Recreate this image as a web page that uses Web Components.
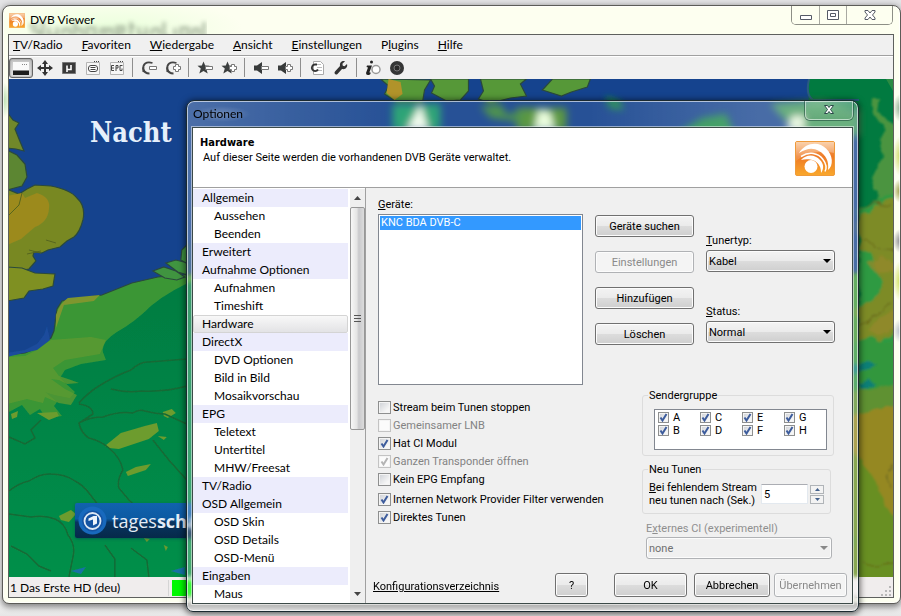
<!DOCTYPE html>
<html lang="de">
<head>
<meta charset="utf-8">
<title>DVB Viewer</title>
<style>
  html, body { margin: 0; height: 100%; }
  body { font: 11px/13px Roboto, "Liberation Sans", sans-serif; color: #000; }
</style>
</head>
<body>
<desk-top>
  <app-window heading="DVB Viewer">
    <menu-bar slot="bars">
      <menu-item><u>T</u>V/Radio</menu-item><menu-item><u>F</u>avoriten</menu-item><menu-item><u>W</u>iedergabe</menu-item><menu-item><u>A</u>nsicht</menu-item><menu-item><u>E</u>instellungen</menu-item><menu-item>P<u>l</u>ugins</menu-item><menu-item><u>H</u>ilfe</menu-item>
    </menu-bar>
    <tool-bar slot="bars"></tool-bar>
    <weather-map>Nacht</weather-map>
    <status-bar slot="status">1 Das Erste HD (deu)</status-bar>
  </app-window>

  <options-dialog heading="Optionen">
    <page-header slot="header" heading="Hardware">Auf dieser Seite werden die vorhandenen DVB Geräte verwaltet.</page-header>
    <option-tree slot="tree">
      <tree-item group>Allgemein</tree-item>
      <tree-item>Aussehen</tree-item>
      <tree-item>Beenden</tree-item>
      <tree-item group>Erweitert</tree-item>
      <tree-item group>Aufnahme Optionen</tree-item>
      <tree-item>Aufnahmen</tree-item>
      <tree-item>Timeshift</tree-item>
      <tree-item group selected>Hardware</tree-item>
      <tree-item group>DirectX</tree-item>
      <tree-item>DVD Optionen</tree-item>
      <tree-item>Bild in Bild</tree-item>
      <tree-item>Mosaikvorschau</tree-item>
      <tree-item group>EPG</tree-item>
      <tree-item>Teletext</tree-item>
      <tree-item>Untertitel</tree-item>
      <tree-item>MHW/Freesat</tree-item>
      <tree-item group>TV/Radio</tree-item>
      <tree-item group>OSD Allgemein</tree-item>
      <tree-item>OSD Skin</tree-item>
      <tree-item>OSD Details</tree-item>
      <tree-item>OSD-Menü</tree-item>
      <tree-item group>Eingaben</tree-item>
      <tree-item>Maus</tree-item>
    </option-tree>
    <hardware-page></hardware-page>
  </options-dialog>
</desk-top>

<script>
const define = (name, html, setup) => {
  const template = document.createElement('template');
  template.innerHTML = `<style>*, *::before, *::after { box-sizing: border-box; } :host { box-sizing: border-box; }</style>` + html;
  customElements.define(name, class extends HTMLElement {
    constructor() {
      super();
      this.attachShadow({ mode: 'open' }).append(template.content.cloneNode(true));
    }
    connectedCallback() { if (setup) setup(this, this.shadowRoot); }
  });
};

const UI = `Lato, "Open Sans", sans-serif`;

/* Desktop: free canvas that holds the windows */
define('desk-top', `
<style>
  :host { display: block; position: relative; min-height: 100vh; overflow: hidden;
    background: linear-gradient(#e4e4e6 0 4px, #fff 22px, #fff 96%, #e6e6e6); }
  ::slotted(app-window) { position: absolute; inset: 5px 0 12px 2px; }
  ::slotted(options-dialog) { position: absolute; inset: 100px 42px 4px 186px; }
</style>
<slot></slot>`);

/* Orange broadcast logo */
define('dvb-logo', `
<style>:host { display: block; } svg { display: block; width: 100%; height: 100%; }</style>
<svg viewBox="0 0 40 35" preserveAspectRatio="none" aria-hidden="true">
  <defs>
    <linearGradient id="g" x1="0" y1="0" x2="0" y2="1"><stop offset="0" stop-color="#f5a45a"/><stop offset=".45" stop-color="#ee7a26"/><stop offset="1" stop-color="#f9a82c"/></linearGradient>
    <linearGradient id="h" x1="0" y1="0" x2="0" y2="1"><stop offset="0" stop-color="#fff" stop-opacity=".5"/><stop offset="1" stop-color="#fff" stop-opacity=".1"/></linearGradient>
  </defs>
  <rect x=".5" y=".5" width="39" height="34" rx="1.5" fill="url(#g)" stroke="#ef9a3a"/>
  <path d="M1 1h38v11C26 9 12 12 1 20z" fill="url(#h)"/>
  <circle cx="16" cy="25.500" r="6.500" fill="#fff"/>
  <path d="M4 12C9 4 18 1 26 4c8 4 13 13 10 21-1 2-2 3-3 4 1-9-2-15-9-19-7-4-13-2-20 2z" fill="#fff"/>
  <path d="M6 19c5-6 14-6 19 0 4 4 4 9 1 13 0-6-2-9-6-12-4-2-10-2-14-1z" fill="#fff"/>
  <path d="M6 15.500c8-5 17-4 22 3 3 4 4 8 2 12" fill="none" stroke="#fff" stroke-width="1.500"/>
</svg>`);

/* Main window */
define('app-window', `
<style>
  :host { display: flex; flex-direction: column; padding: 0 6px 5px 5px; border: 1px solid #5c5c58; border-radius: 8px 8px 7px 7px;
    background:
      radial-gradient(7px 14px at 100% 102px, #8fae93, transparent),
      radial-gradient(7px 20px at 100% 150px, #cfd964, transparent),
      radial-gradient(7px 12px at 100% 185px, #9a9a40, transparent),
      radial-gradient(7px 12px at 100% 235px, #88888e, transparent),
      radial-gradient(7px 20px at 100% 275px, #cfe05c, transparent),
      radial-gradient(7px 12px at 100% 325px, #b5bcc9, transparent),
      radial-gradient(8px 18px at 0 94px, #b9dfae, transparent),
      radial-gradient(130px 30px at 110px 22px, #eaffdc, transparent),
      #fdfff0;
    box-shadow: inset 0 0 0 1px #ffffffb0, 0 2px 6px 1px #0007; font: 12px/16px ${UI}; }
  header { display: flex; align-items: flex-start; flex: none; height: 28px; position: relative; }
  .behind { position: absolute; left: 19px; top: 12px; height: 16px; overflow: hidden; }
  .behind svg { display: block; filter: blur(2px); }
  dvb-logo { width: 16px; height: 15px; margin: 7px 0 0 1px; }
  h1 { margin: 6px auto 0 5px; font: inherit; position: relative; }
  .buttons { display: flex; margin-right: 1px; border: 1px solid #8d8f86; border-top: 0; border-radius: 0 0 5px 5px; overflow: hidden; position: relative; }
  button { width: 27px; height: 18px; padding: 0; border: 0; border-left: 1px solid #a9aaa2; background: #fdfff0; display: grid; place-items: center; }
  button:first-child { border-left: 0; }
  button:last-child { width: 46px; }
  .body { flex: 1; min-height: 0; display: flex; flex-direction: column; border: 1px solid #5e605e; background: #f0f0f0; }
  slot { display: contents; }
  ::slotted(weather-map) { flex: 1; min-height: 0; }
</style>
<header>
  <div class="behind" aria-hidden="true"><svg width="180" height="22"><path d="M2 8h9M4 13h8v6M16 3v16M22 9v9h8v-9M36 10v8M36 11h7v8M48 4v15M48 11h7v8M60 10h8v9h-8zM74 10v9M74 11h5v8M79 11h6v8M90 14h7v-5h-7v10h8M104 4v15M102 9h6M112 9v9h7v-9M125 11v8M125 11h7v8M137 4v15h6M148 10v9M154 10h7v9h-7zM166 10v9M166 11h6v8M177 4v18h-4" fill="none" stroke="#a9b8a0" stroke-width="3"/></svg></div>
  <dvb-logo></dvb-logo><h1></h1>
  <div class="buttons">
    <button aria-label="Minimieren"><svg width="14" height="14"><path d="M1.500 7.500h11v4h-11z" fill="#fff" stroke="#555a66"/></svg></button>
    <button aria-label="Maximieren"><svg width="14" height="14"><path d="M1.500 2.500h11v9h-11z" fill="#fff" stroke="#555a66"/><path d="M4.500 5.500h5v3h-5z" fill="#fff" stroke="#555a66"/></svg></button>
    <button aria-label="Schließen"><svg width="14" height="14"><path d="M2 2.500h3l2 2.500 2-2.500h3v1.500l-2.500 3 2.500 3v1.500h-3l-2-2.500-2 2.500h-3v-1.500l2.500-3-2.500-3z" fill="#fff" stroke="#555a66"/></svg></button>
  </div>
</header>
<div class="body"><slot name="bars"></slot><slot></slot><slot name="status"></slot></div>`,
(el, root) => { root.querySelector('h1').textContent = el.getAttribute('heading'); });

define('menu-bar', `
<style>:host { display: flex; flex: none; height: 20px; align-items: center; background: #f0f0f0; padding-left: 4px; gap: 19px; }</style><slot></slot>`,
el => el.setAttribute('role', 'menubar'));

define('menu-item', `
<style>:host { display: block; } button { display: block; border: 0; padding: 0; background: none; font: 12px/18px ${UI}; color: #000; }</style>
<button role="menuitem"><slot></slot></button>`);

/* Tool bar */
const minus = `<path d="M8.500 6.500h7v3h-7z" fill="#fff" stroke="#777"/>`;
const plus = `<path d="M10.500 4.500h3v2h2v3h-2v2h-3v-2h-2v-3h2z" fill="#fff" stroke="#777"/>`;
const curl = `<path d="M11.500 3C5 1 1.500 4.500 2.500 9c.6 2.700 2.500 4.500 6 4.500" fill="none" stroke="#444" stroke-width="1.800"/><path d="M1 6.500l.5 5.500 3.500.5z" fill="#444"/>`;
const star = `<path d="M6.500 1.500l1.700 4 4.300.3-3.300 2.800 1.500 5-4.200-2.600L2.300 13.600l1.500-5L.5 5.800l4.300-.3z" fill="#3c3f3f"/>`;
const speaker = `<path d="M1 5.500h3L9 2v12l-5-3.500H1z" fill="#383b3b"/>`;
const frame = `<path d="M1.500 2.500h13v12h-13z" fill="#f6f6f6" stroke="#b5b5b5"/><path d="M9 1.500h6" stroke="#444" stroke-dasharray="1 1"/>`;
const tools = [
  ['Fenstermodus', `<path d="M0 2h16v8H0z" fill="#fafafa"/><path d="M9 4.500h5" stroke="#888" stroke-dasharray="1 1"/><path d="M0 10h16v2H0z" fill="#888"/><path d="M0 11h16v4H0z" fill="#1d1d1d"/>`, 1],
  ['Vollbild', `<path d="M7 4h2v3h3V5l4 3-4 3V9H9v3h2l-3 4-3-4h2V9H4v2L0 8l4-3v2h3V4H5l3-4 3 4z" fill="#333"/>`],
  ['Teletext', `<path d="M1.500 2.500h13v11h-13z" fill="#3a3a3a" stroke="#777"/><path d="M6 12V5.500M6 9.500h4V5" fill="none" stroke="#fff" stroke-width="1.600"/>`],
  ['Untertitel', frame + `<rect x="3.500" y="5.500" width="9" height="6" rx="2.500" fill="#fff" stroke="#444"/><path d="M5.500 7.500h5M5.500 9.500h5" stroke="#444"/>`],
  ['EPG', frame + `<path d="M5 5.500H2.500v5H5M3 8h2M7 11V5.500h2V8H7M13.500 5.500H11v5h2V8.500" fill="none" stroke="#444"/>`],
  null,
  ['Kanal zurück', curl + minus], ['Kanal vor', curl + plus],
  null,
  ['Favorit zurück', star + minus], ['Favorit vor', star + plus],
  null,
  ['Leiser', speaker + minus], ['Lauter', speaker + plus],
  null,
  ['Aktualisieren', `<path d="M4.500 1.500h7l3 3v10h-10z" fill="#fff" stroke="#aaa"/><path d="M8 4.500h4M8 7.500h5M8 10.500h5" stroke="#bbb"/><path d="M8 4.500H6a3.300 3.300 0 1 0 3 5" fill="none" stroke="#333" stroke-width="1.800"/>`],
  ['Optionen', `<path d="M14 4l-2.500 2.200-1.700-.5-.4-1.900L12 1.300C9 .5 6.500 2.500 7 6L2 11.500c-1.500 2 .7 4 2.500 2.500L9 9c3.500.9 6-2 5-5z" fill="#333"/>`],
  null,
  ['Information', `<circle cx="11" cy="9.500" r="4" fill="#fff" stroke="#999" stroke-width="1.500"/><circle cx="6.500" cy="2" r="1.500" fill="#222"/><path d="M2 5.500h5l-2.500 6.500q0 1 1.500.5l-1 2q-4 1.500-4-1.500l2-5.500-1.500-.5z" fill="#222"/>`],
  ['Aufnahme', `<circle cx="8" cy="8" r="7" fill="#353636"/><circle cx="8" cy="8" r="3" fill="#2a2a2a" stroke="#777"/>`]
];
define('tool-bar', `
<style>
  :host { display: flex; flex: none; align-items: center; height: 24px; border-top: 1px solid #a0a0a0; box-shadow: inset 0 1px #fff; background: #f0f0f0; }
  button { width: 24px; height: 20px; padding: 0; border: 1px solid transparent; background: none; display: grid; place-items: center; }
  button.on { border: 1px solid #666; border-radius: 3px; background: linear-gradient(#c4c4c4, #e4e4e4); box-shadow: inset 0 0 2px #777; }
  i { width: 1px; height: 19px; margin: 0 4px 0 3px; background: #8e8e8e; }
  svg { display: block; }
</style>`,
(el, root) => {
  el.setAttribute('role', 'toolbar');
  for (const tool of tools) {
    root.append(document.createRange().createContextualFragment(tool
      ? `<button class="${tool[2] ? 'on' : ''}" aria-label="${tool[0]}"><svg width="16" height="16" viewBox="0 0 16 16" aria-hidden="true">${tool[1]}</svg></button>`
      : '<i></i>'));
  }
});

/* TV picture: weather map with its captions pinned over it */
define('weather-map', `
<style>
  :host { display: block; position: relative; overflow: hidden; background: #15438e; }
  svg.map { position: absolute; inset: 0; width: 100%; height: 100%; }
  .title { position: absolute; left: 81px; top: 38px; font: bold 27px/32px "DejaVu Serif Condensed", "DejaVu Serif", serif; color: #e6f0fb; }
  .banner { position: absolute; left: 66px; bottom: 39px; display: flex; align-items: center; gap: 5px; height: 35px; width: 300px; padding-left: 3px;
    background: linear-gradient(#1162ae, #0c5aa2 45%, #08345f 55%, #06294a); border-radius: 2px; box-shadow: 0 1px 3px #0357; color: #e3edf7; font: 18px/24px "Open Sans", sans-serif; }
  .banner svg { flex: none; }
</style>
<svg class="map" viewBox="8 79 885 498" preserveAspectRatio="none" aria-hidden="true">
  <defs>
    <filter id="s" x="-20%" y="-50%" width="140%" height="200%"><feGaussianBlur stdDeviation="3"/></filter>
    <filter id="t" x="-5%" y="-5%" width="110%" height="110%"><feGaussianBlur stdDeviation=".6"/></filter>
    <filter id="u" x="-50%" y="-5%" width="200%" height="110%"><feTurbulence type="fractalNoise" baseFrequency=".06" numOctaves="3" seed="4"/><feDisplacementMap in="SourceGraphic" scale="12" xChannelSelector="R" yChannelSelector="G" result="d"/><feGaussianBlur in="d" stdDeviation=".8"/></filter>
    <linearGradient id="k" x1="0" y1="0" x2="0" y2="1"><stop offset="0" stop-color="#007c42"/><stop offset="1" stop-color="#068f4a"/></linearGradient>
  </defs>
  <rect x="8" y="79" width="885" height="498" fill="#15438e"/>
  <g filter="url(#t)">
  <g stroke="#2b4a3c" stroke-width="1.200">
    <path d="M6 112l6 8 6 3-4 6 4 10 5 12-8-2-9-1z" fill="#71882c"/>
    <path d="M6 150l10 5 8 9 2 13-5 9-15 4z" fill="#5b8630"/>
    <path d="M6 189l12 5 8-5 8-4 16 1q20 4 26 12 9 8 6 22-3 12-9 17l-7 4-7 6-12 3-6 3-8-1-1 4 3 5-7 8-12 2H6z" fill="#788824"/>
    <path d="M6 267l15 1 13 5 20 1-2 12-10 3-14 2-5 7-17 3z" fill="#7f9023"/>
    <path d="M6 355l18-2 12-5 14-10 3-7 3-22 5-8 40-6 30-12 26-6 50-4h700v306H6z" fill="#3b9636"/>
    <path d="M152 271l11-4 12 4 9 6-8 3-12-2zM165 263l10-3 12 3v12l-10-3zM181 250l6-6v20l-7-4z" fill="#3f9440"/>
    <path d="M380 79l8 7-4 8 12 8h26l2-12 6-10zM430 79l4 7-3 7 15 8 14-1 8-9v-12zM480 79l3 12-5 8 12 4 20-5 16-2-6-12 6-5zM542 90l10-11h38l-3 8-16 5-10 4z" fill="#579839"/>
  </g>
  <path d="M6 196l15-3 3 5 12-5q14 4 12 16-1 13-14 18l-14 12-14 6z" fill="#9c8a1e"/>
  <path d="M8 215l10-10 3-12M28 250l12 3M45 240l10 3M26 254l14-3" fill="none" stroke="#56651f"/>
  <path d="M388 79l12 3 2 12-8 6-8-7z" fill="#b19329"/>
  <path d="M55 315q4-12 12-17l32-3-6 6-30 4-8 23z" fill="#7f962f"/>
  <path d="M200 278q-28 10-50 28-16 16-34 26-16 10-14 20l3 8-25 4-16 6-5 8 15 14-5 6-15-3-10-3 12 10-3 4 8 10-16 2-6-9-10 6-8-10-15 8v166h185z" fill="url(#k)"/>
  <path d="M6 357l18-1 12-6 14-10 40-3 15 3-6 14-35 6-12 8 6 8 12 4 8 3-12 1-8-4-8-1 14 10 12 6-6 10-12-2-14-6-2 6-16-4-20 5z" fill="#5f9a2f" opacity=".8"/>
  <path d="M6 357l16-4 14-3 13-10-3-14-3 9-7 9-12 6-18 3z" fill="#1b4c9c"/>
  <g fill="#6d9c2e">
    <path d="M104 446l16-13 24-7 12-3 2 8-10 8-30 10-10-1zM125 472l10-5 15-3-5 6-18 6zM162 412l9-3 4 4-8 5-4-2zM36 413l20-1 2 4-10 4zM10 414l7-3-1 6-5 2zM58 516l12-6 5 4-7 8-8-2zM157 436l9 1-3 3zM143 538l6 1-3 3zM163 545l4 2-2 4z"/>
  </g>
  <path d="M70 571l15-4-5 7zM170 571l14-4v8z" fill="#1472a4"/>
  <g fill="none" stroke="#146a36" stroke-width="1.500">
    <path d="M78 403q10-11 20-17 16-10 32-16 10-9 18-8l38-3M80 422q10-5 22-5 16-6 30-4 6-4 12-2 12 3 20 3l22 10M110 389q16 4 30 2 26 1 46-5M78 404q14 2 14 10l-14 9q2 10 10 15 12 3 20 10 12 10 14 22-6 10-4 18l10 12q8 6 8 14l-8 6M8 491q10-8 20-10 12-8 22-7 14 0 24 7 8 4 14 12l14 18M8 514l22 3q14-2 24 2 10 4 13 16 8 10 5 22l-4 20M40 420l-10 10 4 8-10 6-16-7M10 546l16 8 12 12 12 5M104 545l10 14v18M130 548l16 12 2 17M152 440l16 20 18 20"/>
  </g>
  </g>
  <path d="M808 79h85v240l-34 4V110h-50z" fill="#017a40"/>
  <path d="M809 79q-4 16 4 21h46" fill="none" stroke="#2a5c80" stroke-width="2"/>
  <path d="M872 79h14l7 12v-12z" fill="#2b8b42"/>
  <g filter="url(#u)">
  <path d="M900 213l-25-4 1-20-3-14 9-17-2-12 4-14-6-8-7-10 1-17 8 3-2 10 12 15 10 10z" fill="#4b9440"/>
  <path d="M900 190l-41 18v185l41-6z" fill="#2e9a42"/>
  <path d="M900 195l-27 10-14 16v28l14 5 10 28-12 20-12 6v60l14-20 8-10 19-8z" fill="#7d8b25"/>
  <path d="M900 266l-21-8-12 6 12 8 21 3zM900 305l-17 11-14 12 8 8 23-10z" fill="#93882a" opacity=".8"/>
  <path d="M850 345l21-6 10 4 19-4v50l-50 6z" fill="#33973e"/>
  <path d="M850 364l21-5 8 5-7 6-22 4zM855 384l14-4 6 4-16 6z" fill="#087f76"/>
  <path d="M850 392l21-4 29-6v200h-50z" fill="#5f9130"/>
  <path d="M850 416l50-12v126l-27-34-14-10-9-20z" fill="#958824"/>
  <path d="M850 450l21 24 29 56v60h-50z" fill="#678f20"/>
  <path d="M859 210l14-8 20 2M862 240l16 8 14 2M859 325l16-10 10-9 8-4M893 465l-6 10 5 12M859 562l16 3 18-2" fill="none" stroke="#65631e"/>
  </g>
  <g filter="url(#s)">
    <path d="M392 104h48v26h-48z" fill="#1e9d6c"/><path d="M516 108h50v22h-50z" fill="#4f9130"/><path d="M480 106l20-2 6 10 20-2-6 10-30-4z" fill="#418a40"/>
    <path d="M420 104l8 26h-22z" fill="#f4fff0"/><path d="M538 110l12 2 4 18h-20z" fill="#eaffdc"/>
    <path d="M682 130l20-12 24-4 8 20h-54zM605 96l16 6 2 8-14-2z" fill="#1c8c46"/>
    <path d="M770 104l50-4 40 10v26h-60z" fill="#3f9a5c"/><path d="M792 116h12v14h-18z" fill="#e6f8dd"/>
  </g>
</svg>
<div class="title"><slot></slot></div>
<div class="banner"><svg width="29" height="29" viewBox="0 0 29 29" aria-hidden="true"><circle cx="14.500" cy="14.500" r="14" fill="#1869bd"/><circle cx="14.500" cy="15" r="10.500" fill="#1553a2"/><circle cx="14.500" cy="15" r="8" fill="none" stroke="#dfe9f5" stroke-width="1.800"/><path d="M10.500 12.500l5-2.500h3.500v7.500l-4 2v-6l-4.500 1.500z" fill="#eef4fb"/></svg><span>tages<b>schau</b></span></div>`);

define('status-bar', `
<style>
  :host { display: flex; flex: none; align-items: center; height: 20px; padding-top: 1px; background: #f0eded; font: 12px/18px ${UI}; }
  .name { width: 159px; padding-left: 1px; }
  .signal { width: 60px; height: 16px; margin-left: 3px; background: #00f800; }
  .cell { border-left: 1px solid #d5d5d5; }
  svg { margin: 0 1px 0 auto; align-self: flex-end; }
</style>
<div class="name"><slot></slot></div><div class="cell"><div class="signal"></div></div>
<svg width="12" height="12" aria-hidden="true"><path d="M9 1h2v2H9zM9 5h2v2H9zM9 9h2v2H9zM5 5h2v2H5zM5 9h2v2H5zM1 9h2v2H1z" fill="#b8b8b8"/></svg>`);

/* Options dialog: glass frame */
define('options-dialog', `
<style>
  :host { display: flex; flex-direction: column; padding: 0 5px 7px 5px; border: 1px solid #1b2a30; border-radius: 8px 8px 7px 7px;
    background: linear-gradient(90deg, #ffffff3c, #ffffff14 30%, #ffffff14 60%, #ffffff38 85%, #ffffff38); backdrop-filter: blur(2px);
    box-shadow: inset 0 0 0 1px #ffffff9c, 0 1px 6px 1px #0009; }
  header { display: flex; flex: none; align-items: flex-start; height: 26px; }
  h2 { margin: 5px auto 0 0; padding: 0 8px 0 1px; font: 12px/16px ${UI}; background: radial-gradient(closest-side, #ffffff38, transparent); }
  button { width: 48px; height: 19px; padding: 0; border: 1px solid #dfeee6a0; border-top: 0; border-radius: 0 0 5px 5px; background: linear-gradient(#ffffff30, #ffffff08 50%, #0000000a); display: grid; place-items: center; box-shadow: 0 0 0 1px #0f3a3080; }
  .body { flex: 1; min-height: 0; display: grid; grid-template: auto minmax(0, 1fr) / 173px minmax(0, 1fr); border: 1px solid #3c4a48; outline: 1px solid #ffffff80; background: #f0f0f0; }
  ::slotted([slot=header]) { grid-column: 1 / -1; }
</style>
<header><h2></h2><button aria-label="Schließen"><svg width="14" height="14"><path d="M2.500 2.500h3l1.500 2 1.500-2h3l-3 4 3 4h-3l-1.500-2-1.500 2h-3l3-4z" fill="#fff" stroke="#2c4a4a"/></svg></button></header>
<div class="body"><slot name="header"></slot><slot name="tree"></slot><slot></slot></div>`,
(el, root) => { root.querySelector('h2').textContent = el.getAttribute('heading'); });

define('page-header', `
<style>
  :host { display: flex; justify-content: space-between; align-items: flex-start; height: 60px; padding: 8px 17px 0 7px; border-bottom: 1px solid #a0a0a0; background: #fff; }
  h3 { margin: 0; font: bold 11px/14px "DejaVu Sans Condensed", "DejaVu Sans", sans-serif; }
  p { margin: 0; padding-left: 3px; line-height: 15px; }
  dvb-logo { width: 40px; height: 35px; margin-top: 5px; flex: none; }
</style>
<div><h3></h3><p><slot></slot></p></div><dvb-logo></dvb-logo>`,
(el, root) => { root.querySelector('h3').textContent = el.getAttribute('heading'); });

define('option-tree', `
<style>
  :host { display: grid; grid-template-columns: minmax(0, 1fr) 15px; gap: 2px; min-height: 0; padding-top: 1px; overflow: hidden; border-right: 1px solid #a0a0a0; background: #fff; }
  .rows { overflow: hidden; }
  .scroll { display: flex; flex-direction: column; background: #efefef; }
  .scroll button { flex: none; height: 18px; width: 15px; padding: 0; border: 0; background: none; display: grid; place-items: center; }
  .track { flex: 1; }
  .thumb { height: 59%; width: 15px; border: 1px solid #979797; border-radius: 2px; background: linear-gradient(90deg, #f7f7f7, #e4e4e4 45%, #c9c9cc 60%, #dcdcdc); display: grid; place-items: center; }
</style>
<div class="rows" role="tree"><slot></slot></div>
<div class="scroll">
  <button aria-label="Nach oben"><svg width="7" height="4"><path d="M0 4h7L3.500 0z" fill="#444"/></svg></button>
  <div class="track"><div class="thumb"><svg width="7" height="7"><path d="M0 .5h7M0 3.500h7M0 6.500h7" stroke="#555"/></svg></div></div>
  <button aria-label="Nach unten"><svg width="7" height="4"><path d="M0 0h7L3.500 4z" fill="#444"/></svg></button>
</div>`);

define('tree-item', `
<style>
  :host { display: block; }
  button { display: block; width: 100%; height: 18px; padding: 0 0 0 21px; border: 0; background: #fff; color: #000; font: 12px/18px ${UI}; text-align: left; }
  :host([group]) button { padding-left: 9px; background: #ececfc; }
  :host([selected]) button { padding-left: 8px; line-height: 16px; border: 1px solid #d4d4d4; border-radius: 2px; background: linear-gradient(#f8f8f8, #e3e3e5); }
</style>
<button role="treeitem"><slot></slot></button>`);

/* Form controls */
define('push-button', `
<style>
  :host { display: block; }
  button { display: block; width: 100%; height: var(--height, 22px); padding: 0 2px; border: 1px solid #707070; border-radius: 3px; font: inherit; color: #000; white-space: nowrap;
    background: linear-gradient(#f3f3f3, #ebebeb 48%, #dcdcdc 52%, #cfcfcf); box-shadow: inset 0 0 0 1px #fcfcfc; }
  button:disabled { color: #8a8a8a; border-color: #b0b2b5; background: #f4f4f4; }
</style>
<button><slot></slot></button>`,
(el, root) => { root.querySelector('button').disabled = el.hasAttribute('disabled'); });

define('drop-down', `
<style>
  :host { display: block; }
  label { display: block; }
  .box { display: grid; align-items: center; margin-top: var(--gap, 3px); }
  select, svg { grid-area: 1 / 1; }
  select { appearance: none; width: 100%; height: 22px; margin: 0; padding: 0 18px 0 2px; border: 1px solid #707070; border-radius: 3px; font: inherit; color: #000;
    background: linear-gradient(#f3f3f3, #ebebeb 48%, #dcdcdc 52%, #cfcfcf); box-shadow: inset 0 0 0 1px #fcfcfc; }
  svg { justify-self: end; margin-right: 4px; pointer-events: none; fill: #000; }
  :host([disabled]) label { color: #8f8f8f; }
  :host([disabled]) svg { fill: #888; }
  select:disabled { color: #707070; opacity: 1; border-color: #b0b2b5; background: #f0f0f0; }
</style>
<label for="s"><slot></slot></label>
<div class="box"><select id="s"><option></option></select><svg width="8" height="4"><path d="M0 0h8L4 4z"/></svg></div>`,
(el, root) => {
  root.querySelector('option').textContent = el.getAttribute('value');
  root.querySelector('select').disabled = el.hasAttribute('disabled');
});

define('check-box', `
<style>
  :host { display: block; }
  label { display: flex; align-items: center; gap: var(--gap, 2px); height: var(--row, 18px); white-space: nowrap; }
  .mark { display: grid; place-items: center; flex: none; }
  input, svg { grid-area: 1 / 1; }
  input { appearance: none; width: var(--size, 13px); height: var(--size, 13px); margin: 0; border: 1px solid #8e8f8f; background: linear-gradient(135deg, #cdd0d5, #f6f6f6 75%); background-clip: content-box; padding: 1px; background-color: #f4f4f4; box-shadow: inset 0 0 0 1px #f4f4f4; }
  svg { visibility: hidden; pointer-events: none; stroke: #3d5c9c; }
  input:checked + svg { visibility: visible; }
  input:disabled { border-color: #c3c3c3; background: #fbfbfb; }
  input:disabled + svg { stroke: #b4b4b4; }
  :host([disabled]) label { color: #838383; }
</style>
<label><span class="mark"><input type="checkbox"><svg width="9" height="9" aria-hidden="true"><path d="M1.500 4.500L3.500 7.500L7.500 1" fill="none" stroke-width="2"/></svg></span><span><slot></slot></span></label>`,
(el, root) => {
  const input = root.querySelector('input');
  input.checked = el.hasAttribute('checked');
  input.disabled = el.hasAttribute('disabled');
});

define('group-box', `
<style>
  :host { display: block; }
  fieldset { margin: 0; min-width: 0; padding: var(--pad, 7px 6px 5px 11px); border: 1px solid #dcdcdc; border-radius: 3px; }
  legend { padding: 0 1px; margin-left: var(--legend, -6px); line-height: 13px; }
</style>
<fieldset><legend></legend><slot></slot></fieldset>`,
(el, root) => { root.querySelector('legend').textContent = el.getAttribute('heading'); });

define('spin-box', `
<style>
  :host { display: flex; align-items: center; justify-content: space-between; }
  label { white-space: nowrap; }
  .field { display: flex; align-items: center; gap: 2px; }
  input { width: 47px; height: 20px; padding: 0 2px; border: 1px solid #e3e9ef; border-top-color: #abadb3; background: #fff; font: inherit; }
  .steps { display: grid; gap: 1px; }
  button { width: 14px; height: 9px; padding: 0; border: 1px solid #b0b4b8; background: #f3f3f3; display: grid; place-items: center; }
</style>
<label for="n"><slot></slot></label>
<div class="field"><input id="n" type="text" inputmode="numeric" value="5">
  <div class="steps"><button aria-label="Mehr"><svg width="5" height="3"><path d="M0 3h5L2.500 0z" fill="#44618c"/></svg></button><button aria-label="Weniger"><svg width="5" height="3"><path d="M0 0h5L2.500 3z" fill="#44618c"/></svg></button></div>
</div>`);

define('device-list', `
<style>
  :host { display: flex; flex-direction: column; }
  .box { height: 171px; margin-top: 3px; padding: 1px; border: 1px solid #828790; background: #fff; }
  .row { line-height: 14px; padding: 0 1px; background: #3399ff; color: #fff; }
</style>
<span id="l"><u>G</u>eräte:</span>
<div class="box" role="listbox" aria-labelledby="l"><div class="row" role="option" aria-selected="true"><slot></slot></div></div>`);

define('hardware-page', `
<style>
  :host { display: flex; flex-direction: column; min-width: 0; padding: 10px 5px 6px 7px; }
  .devices { display: grid; grid-template-columns: 205fr 99fr 129fr; gap: 12px; padding: 0 12px 0 5px; }
  .actions { display: grid; align-content: start; gap: 14px; padding-top: 17px; }
  .modes { display: grid; align-content: start; gap: 33px; padding-top: 36px; }
  .settings { display: grid; grid-template-columns: minmax(0, 1fr) 192px; gap: 12px; margin-top: 4px; padding: 0 13px 0 5px; }
  .checks { padding-top: 9px; }
  .network { padding-top: 2px; }
  .groups { display: grid; grid-template-columns: minmax(0, 1fr); align-content: start; gap: 7px; }
  .channels { height: 41px; padding: 1px 3px; border: 1px solid #828790; background: #fff; display: grid; grid-template: repeat(2, 13px) / repeat(3, 42px) minmax(0, 1fr); grid-auto-flow: column; --size: 11px; --row: 13px; --gap: 4px; }
  .tuning { margin-right: 3px; --pad: 5px 6px 6px 6px; --legend: -1px; }
  .external { margin: 1px 2px 0 4px; --gap: 2px; }
  .footer { display: flex; align-items: center; margin-top: auto; --height: 24px; }
  .footer a { color: #000; margin-right: auto; padding-top: 3px; }
  .help { width: 33px; margin-right: 26px; }
  .wide { width: 73px; }
  .ok { margin-right: 7px; }
  .cancel { width: 76px; margin-right: 4px; }
</style>
<div class="devices">
  <device-list>KNC BDA DVB-C</device-list>
  <div class="actions"><push-button>Geräte suchen</push-button><push-button disabled>Einstellungen</push-button><push-button>Hinzufügen</push-button><push-button>Löschen</push-button></div>
  <div class="modes"><drop-down value="Kabel"><u>T</u>unertyp:</drop-down><drop-down value="Normal"><u>S</u>tatus:</drop-down></div>
</div>
<div class="settings">
  <div class="checks">
    <check-box>Stream beim Tunen stoppen</check-box>
    <check-box disabled>Gemeinsamer LNB</check-box>
    <check-box checked>Hat CI Modul</check-box>
    <check-box checked disabled>Ganzen Transponder öffnen</check-box>
    <check-box>Kein EPG Empfang</check-box>
    <div class="network"><check-box checked>Internen Network Provider Filter verwenden</check-box>
    <check-box checked>Direktes Tunen</check-box></div>
  </div>
  <div class="groups">
    <group-box heading="Sendergruppe"><div class="channels"><check-box checked>A</check-box><check-box checked>B</check-box><check-box checked>C</check-box><check-box checked>D</check-box><check-box checked>E</check-box><check-box checked>F</check-box><check-box checked>G</check-box><check-box checked>H</check-box></div></group-box>
    <group-box class="tuning" heading="Neu Tunen"><spin-box><u>B</u>ei fehlendem Stream<br>neu tunen nach (Sek.)</spin-box></group-box>
    <drop-down class="external" disabled value="none">E<u>x</u>ternes CI (experimentell)</drop-down>
  </div>
</div>
<div class="footer"><a href="#">Konfigurationsverzeichnis</a><push-button class="help">?</push-button><push-button class="wide ok">OK</push-button><push-button class="cancel">Abbrechen</push-button><push-button class="wide" disabled>Übernehmen</push-button></div>`);
</script>
</body>
</html>
